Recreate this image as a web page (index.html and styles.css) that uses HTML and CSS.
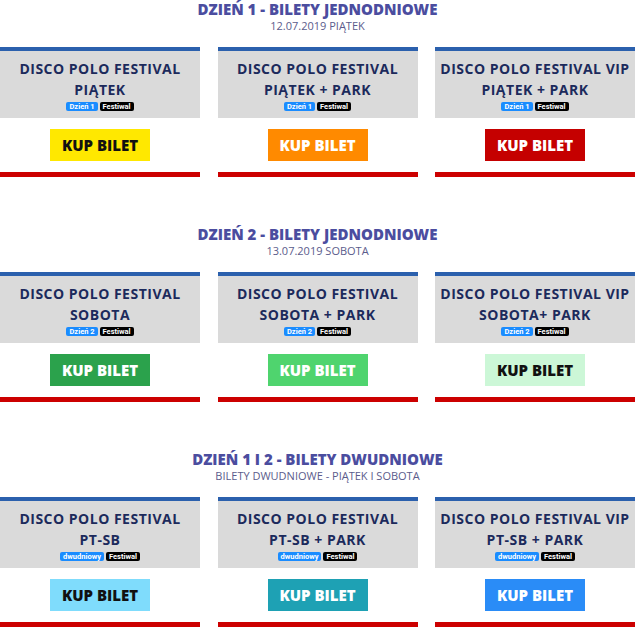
FILE: index.html
```html
<!DOCTYPE html>
<html lang="pl">
<head>
    <meta charset="UTF-8">
    <title>Disco Polo Festival - Bilety</title>
    <link rel="stylesheet" href="styles.css">
</head>
<body>
    <section class="day">
        <h2 class="day-title">DZIEŃ 1 - BILETY JEDNODNIOWE</h2>
        <p class="day-sub">12.07.2019 PIĄTEK</p>
        <div class="tickets">
            <div class="ticket">
                <div class="ticket-head">
                    <h3>DISCO POLO FESTIVAL<br>PIĄTEK</h3>
                    <div class="tags"><span class="tag tag-day">Dzień 1</span><span class="tag tag-fest">Festiwal</span></div>
                </div>
                <div class="ticket-body"><a class="buy buy-yellow" href="#">KUP BILET</a></div>
            </div>
            <div class="ticket">
                <div class="ticket-head">
                    <h3>DISCO POLO FESTIVAL<br>PIĄTEK + PARK</h3>
                    <div class="tags"><span class="tag tag-day">Dzień 1</span><span class="tag tag-fest">Festiwal</span></div>
                </div>
                <div class="ticket-body"><a class="buy buy-orange" href="#">KUP BILET</a></div>
            </div>
            <div class="ticket">
                <div class="ticket-head">
                    <h3>DISCO POLO FESTIVAL VIP<br>PIĄTEK + PARK</h3>
                    <div class="tags"><span class="tag tag-day">Dzień 1</span><span class="tag tag-fest">Festiwal</span></div>
                </div>
                <div class="ticket-body"><a class="buy buy-red" href="#">KUP BILET</a></div>
            </div>
        </div>
    </section>

    <section class="day">
        <h2 class="day-title">DZIEŃ 2 - BILETY JEDNODNIOWE</h2>
        <p class="day-sub">13.07.2019 SOBOTA</p>
        <div class="tickets">
            <div class="ticket">
                <div class="ticket-head">
                    <h3>DISCO POLO FESTIVAL<br>SOBOTA</h3>
                    <div class="tags"><span class="tag tag-day">Dzień 2</span><span class="tag tag-fest">Festiwal</span></div>
                </div>
                <div class="ticket-body"><a class="buy buy-green" href="#">KUP BILET</a></div>
            </div>
            <div class="ticket">
                <div class="ticket-head">
                    <h3>DISCO POLO FESTIVAL<br>SOBOTA + PARK</h3>
                    <div class="tags"><span class="tag tag-day">Dzień 2</span><span class="tag tag-fest">Festiwal</span></div>
                </div>
                <div class="ticket-body"><a class="buy buy-lime" href="#">KUP BILET</a></div>
            </div>
            <div class="ticket">
                <div class="ticket-head">
                    <h3>DISCO POLO FESTIVAL VIP<br>SOBOTA+ PARK</h3>
                    <div class="tags"><span class="tag tag-day">Dzień 2</span><span class="tag tag-fest">Festiwal</span></div>
                </div>
                <div class="ticket-body"><a class="buy buy-mint" href="#">KUP BILET</a></div>
            </div>
        </div>
    </section>

    <section class="day">
        <h2 class="day-title">DZIEŃ 1 I 2 - BILETY DWUDNIOWE</h2>
        <p class="day-sub">BILETY DWUDNIOWE - PIĄTEK I SOBOTA</p>
        <div class="tickets">
            <div class="ticket">
                <div class="ticket-head">
                    <h3>DISCO POLO FESTIVAL<br>PT-SB</h3>
                    <div class="tags"><span class="tag tag-day">dwudniowy</span><span class="tag tag-fest">Festiwal</span></div>
                </div>
                <div class="ticket-body"><a class="buy buy-sky" href="#">KUP BILET</a></div>
            </div>
            <div class="ticket">
                <div class="ticket-head">
                    <h3>DISCO POLO FESTIVAL<br>PT-SB + PARK</h3>
                    <div class="tags"><span class="tag tag-day">dwudniowy</span><span class="tag tag-fest">Festiwal</span></div>
                </div>
                <div class="ticket-body"><a class="buy buy-teal" href="#">KUP BILET</a></div>
            </div>
            <div class="ticket">
                <div class="ticket-head">
                    <h3>DISCO POLO FESTIVAL VIP<br>PT-SB + PARK</h3>
                    <div class="tags"><span class="tag tag-day">dwudniowy</span><span class="tag tag-fest">Festiwal</span></div>
                </div>
                <div class="ticket-body"><a class="buy buy-blue" href="#">KUP BILET</a></div>
            </div>
        </div>
    </section>
</body>
</html>
```

FILE: styles.css
```css
body {
    font-family: 'Open Sans', 'DejaVu Sans', sans-serif;
    margin: 0;
    padding: 0;
    background-color: #ffffff;
    color: #333333;
}

.day {
    margin-bottom: 48px;
}

.day-title {
    margin: 0;
    text-align: center;
    font-size: 15px;
    font-weight: 800;
    line-height: 19px;
    color: #4b4d9f;
}

.day-sub {
    margin: 0 0 14px;
    text-align: center;
    font-size: 11px;
    line-height: 14px;
    color: #5b5c8c;
}

.tickets {
    display: grid;
    grid-template-columns: repeat(3, 1fr);
    gap: 17.5px;
}

.ticket {
    border-top: 4px solid #2b60ad;
    border-bottom: 5px solid #cc0000;
    background-color: #ffffff;
}

.ticket-head {
    background-color: #dadada;
    padding: 7px 0 7px;
    text-align: center;
}

.ticket-head h3 {
    margin: 0;
    font-size: 14px;
    font-weight: 700;
    line-height: 21px;
    letter-spacing: 0.5px;
    color: #1c2a5c;
}

.tags {
    display: flex;
    justify-content: center;
    gap: 2px;
    margin-top: 2px;
}

.tag {
    font-family: 'Roboto', sans-serif;
    font-size: 7.5px;
    font-weight: 700;
    line-height: 9px;
    padding: 0 3px;
    border-radius: 2px;
    color: #ffffff;
}

.tag-day {
    background-color: #1a8cff;
}

.tag-fest {
    background-color: #000000;
}

.ticket-body {
    display: flex;
    justify-content: center;
    padding: 11px 0;
}

.buy {
    display: block;
    width: 100px;
    height: 32px;
    line-height: 32px;
    text-align: center;
    text-decoration: none;
    font-size: 15px;
    font-weight: 800;
    color: #ffffff;
}

.buy-yellow { background-color: #ffe800; color: #111111; }
.buy-orange { background-color: #ff8a00; }
.buy-red { background-color: #c50000; }
.buy-green { background-color: #2ba24c; }
.buy-lime { background-color: #4fd46e; }
.buy-mint { background-color: #ccf7d7; color: #111111; }
.buy-sky { background-color: #7fdcfc; color: #111111; }
.buy-teal { background-color: #1ea1b4; }
.buy-blue { background-color: #2a8cf7; }
```
